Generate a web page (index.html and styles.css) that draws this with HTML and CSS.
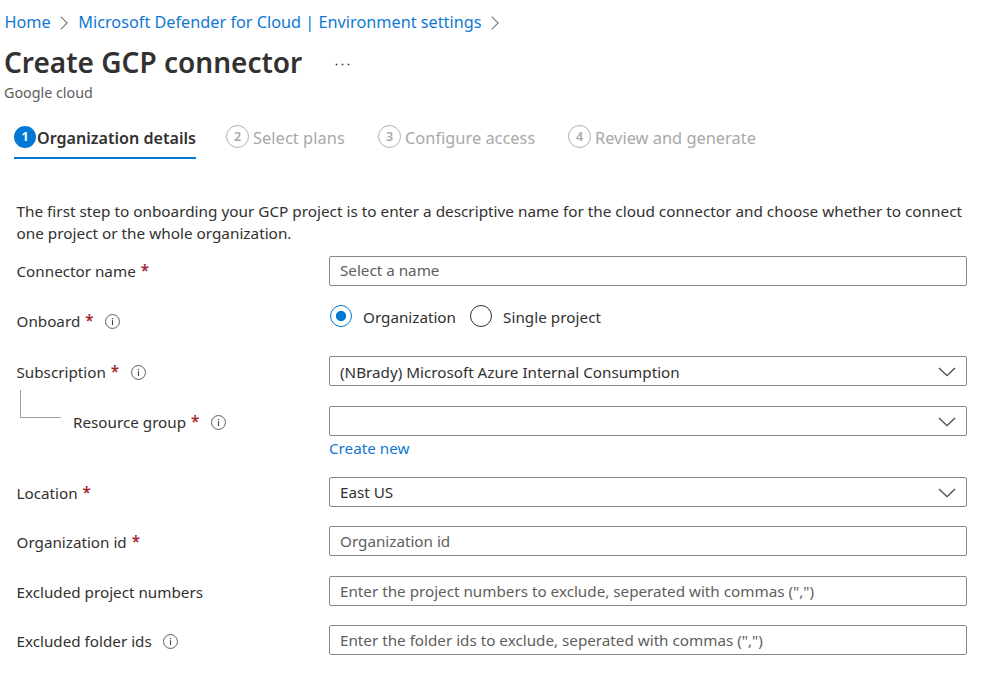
FILE: index.html
```
<!DOCTYPE html>
<html lang="en">
<head>
<meta charset="utf-8">
<title>Create GCP connector</title>
<link rel="stylesheet" href="styles.css">
</head>
<body>
<svg class="defs" aria-hidden="true">
  <symbol id="info" viewBox="0 0 15 15"><circle cx="7.5" cy="7.5" r="6.95" fill="none" stroke="#605e5c" stroke-width="1"/><path d="M7.5 6.2V11" stroke="#484644" stroke-width="1.1"/><path d="M6.9 4h1.2v1.2H6.9z" fill="#484644"/></symbol>
  <symbol id="down" viewBox="0 0 18 10"><path d="M1 1l8 7.7L17 1" fill="none" stroke="#484644" stroke-width="1.3"/></symbol>
  <symbol id="right" viewBox="0 0 8 14"><path d="M.7.7L7.2 7 .7 13.3" fill="none" stroke="#797775" stroke-width="1.1"/></symbol>
</svg>
<nav class="crumbs">
  <a class="home">Home</a><svg class="sep"><use href="#right"/></svg>
  <a class="parent">Microsoft Defender for Cloud | Environment settings</a><svg class="sep"><use href="#right"/></svg>
</nav>
<header class="heading">
  <h1>Create GCP connector</h1>
  <svg class="more" viewBox="0 0 15 3"><path d="M.7.7h1.6v1.6H.7zM6.7.7h1.6v1.6H6.7zM12.7.7h1.6v1.6h-1.6z" fill="#323130"/></svg>
</header>
<p class="subtitle">Google cloud</p>
<div class="steps">
  <div class="step active"><span class="num">1</span><span class="step-name">Organization details</span></div>
  <div class="step plans"><span class="num">2</span><span class="step-name">Select plans</span></div>
  <div class="step access"><span class="num">3</span><span class="step-name">Configure access</span></div>
  <div class="step review"><span class="num">4</span><span class="step-name">Review and generate</span></div>
</div>
<p class="intro">The first step to onboarding your GCP project is to enter a descriptive name for the cloud connector and choose whether to connect<br>one project or the whole organization.</p>
<form class="form">
  <div class="row name">
    <label class="label">Connector name<span class="req">*</span></label>
    <div class="box hint">Select a name</div>
  </div>
  <div class="row onboard">
    <label class="label">Onboard<span class="req">*</span><svg class="info"><use href="#info"/></svg></label>
    <div class="radios">
      <span class="radio on"></span><span class="choice first">Organization</span>
      <span class="radio"></span><span class="choice">Single project</span>
    </div>
  </div>
  <div class="row subscription">
    <label class="label">Subscription<span class="req">*</span><svg class="info"><use href="#info"/></svg></label>
    <div class="box">(NBrady) Microsoft Azure Internal Consumption<svg class="down"><use href="#down"/></svg></div>
  </div>
  <div class="row group">
    <label class="label"><span class="branch"></span>Resource group<span class="req">*</span><svg class="info"><use href="#info"/></svg></label>
    <div>
      <div class="box"><svg class="down"><use href="#down"/></svg></div>
      <a class="create">Create new</a>
    </div>
  </div>
  <div class="row location">
    <label class="label">Location<span class="req">*</span></label>
    <div class="box">East US<svg class="down"><use href="#down"/></svg></div>
  </div>
  <div class="row org">
    <label class="label">Organization id<span class="req">*</span></label>
    <div class="box hint">Organization id</div>
  </div>
  <div class="row projects">
    <label class="label">Excluded project numbers</label>
    <div class="box hint">Enter the project numbers to exclude, seperated with commas (",")</div>
  </div>
  <div class="row folders">
    <label class="label">Excluded folder ids<svg class="info"><use href="#info"/></svg></label>
    <div class="box hint">Enter the folder ids to exclude, seperated with commas (",")</div>
  </div>
</form>
</body>
</html>
```
FILE: styles.css
```
* { box-sizing: border-box; }
body {
  margin: 0;
  height: 680px;
  overflow: hidden;
  background: #fff;
  color: #323130;
  font-family: "Noto Sans", "Open Sans", sans-serif;
  font-size: 15.22px;
  line-height: 22px;
}
svg { display: block; flex: none; }
.defs { display: none; }
a { color: #0f78d4; }
h1, p { margin: 0; }

.crumbs {
  display: flex;
  align-items: center;
  height: 22px;
  margin-top: 11px;
  padding-left: 4.5px;
  font-size: 16.26px;
  white-space: nowrap;
}
.sep { width: 8px; height: 14px; margin: 2px 10px 0 9.5px; }

.heading {
  display: flex;
  align-items: center;
  height: 36px;
  margin-top: 11px;
  padding: 0 0 0 4px;
}
h1 { width: 331px; font-size: 28px; line-height: 36px; font-weight: 600; white-space: nowrap; }
.more { width: 15px; height: 3px; margin-top: 5px; }

.subtitle { padding-left: 4px; margin-top: 3px; font-size: 14.3px; line-height: 20px; color: #605e5c; }

.steps {
  display: flex;
  height: 36px;
  margin: 20px 0 0 14px;
  font-size: 16.4px;
  color: #a9a8a7;
  white-space: nowrap;
}
.step { display: flex; align-items: flex-start; height: 36px; }
.step-name { line-height: 24px; margin-top: 3px; }
.num {
  width: 23px;
  height: 23px;
  margin: 2px 4px 0 0;
  border: 1px solid #b1b0af;
  border-radius: 50%;
  font-size: 12.5px;
  line-height: 21px;
  font-weight: 600;
  text-align: center;
}
.active { width: 182px; color: #323130; font-weight: 600; font-size: 16.1px; border-bottom: 2px solid #0078d4; }
.active .num { width: 22px; height: 22px; margin: 2.5px 1px 0 0; border: 0; background: #0078d4; color: #fff; line-height: 22px; font-weight: 700; }
.plans { margin-left: 30px; width: 152px; }
.plans .step-name { letter-spacing: .05px; }
.access { width: 190px; }

.intro { margin: 41px 0 0 16.5px; font-size: 15.32px; white-space: nowrap; }

.form { margin: 12px 0 0; }
.row {
  display: grid;
  grid-template-columns: 312.5px 638px;
  align-items: start;
  margin-left: 16.5px;
  white-space: nowrap;
}
.label { display: flex; align-items: center; height: 30px; margin-top: 1px; }
.name .label { margin-top: 0; }
.req { width: 7.5px; margin: -2px 0 0 5px; color: #a4262c; font-size: 15.2px; font-weight: 600; line-height: 22px; }
.info { width: 15px; height: 15px; margin-left: 12.5px; margin-top: 1px; }
.folders .info { margin-left: 11px; }
.box {
  display: flex;
  align-items: center;
  justify-content: space-between;
  height: 30px;
  padding: 0 10px;
  border: 1px solid #8a8886;
  border-radius: 2px;
}
.hint { color: #605e5c; }
.name .box { padding-bottom: 2px; }
.subscription .box { padding-top: 2px; }
.down { width: 18px; height: 10px; margin: 1px 0 0 auto; }
.subscription .down { margin-top: 0; }

.onboard { margin-top: 19px; height: 31px; }
.radios { display: flex; align-items: center; height: 22px; padding-left: 1px; }
.radio { width: 22px; height: 22px; border: 1px solid #323130; border-radius: 50%; }
.radio.on { border-color: #0078d4; background: radial-gradient(circle, #0078d4 4.7px, #fff 5.5px); }
.choice { margin: 2px 0 0 11px; letter-spacing: .05px; }
.first { width: 107px; letter-spacing: 0; }

.subscription { margin-top: 20px; height: 31px; }
.group { position: relative; margin-top: 19px; height: 71px; }
.group .label { padding-left: 56.5px; }
.branch {
  position: absolute;
  left: 3.5px;
  top: -16px;
  width: 41px;
  height: 28px;
  border: solid #a19f9d;
  border-width: 0 0 1px 1px;
}
.create { display: block; margin-top: 1px; }
.location, .org, .projects, .folders { height: 31px; }
.org { margin-top: 18px; }
.projects { margin-top: 19px; }
.folders { margin-top: 18px; }
```
